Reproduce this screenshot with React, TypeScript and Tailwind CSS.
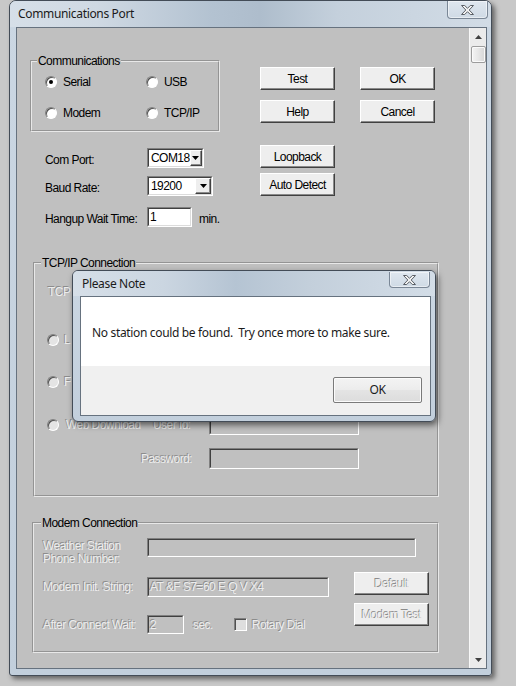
import React from "react";

const classic =
  "font-['Liberation_Sans',Arial,sans-serif] text-[12px] leading-[14px] tracking-[-0.55px] text-black";
const dis = "text-[#ededed] [text-shadow:-1px_-1px_0_#8c8c8c]";
const seg =
  "font-['Noto_Sans',sans-serif] text-[12px] leading-[16px] tracking-[-0.34px] text-[#1b1b1b]";

function ClassicButton({ label, disabled = false }: { label: string; disabled?: boolean }) {
  return (
    <div className="w-[75px] h-[23px] flex items-center justify-center bg-[#eeeeee] border border-t-white border-l-white border-b-[#404040] border-r-[#404040] shadow-[inset_-1px_-1px_0_#8a8a8a]">
      <span className={disabled ? dis : "text-black"}>{label}</span>
    </div>
  );
}

function Radio({ checked = false, disabled = false }: { checked?: boolean; disabled?: boolean }) {
  return (
    <div
      className={
        "w-[12px] h-[12px] rounded-full border border-t-[#808080] border-l-[#808080] border-b-white border-r-white flex items-center justify-center shrink-0 shadow-[inset_1px_1px_0_#505050] " +
        (disabled ? "bg-[#e4e4e4]" : "bg-white")
      }
    >
      {checked && <div className="w-[4px] h-[4px] rounded-full bg-black" />}
    </div>
  );
}

function Sunken({
  className,
  enabled = false,
  children,
}: {
  className: string;
  enabled?: boolean;
  children?: React.ReactNode;
}) {
  return (
    <div
      className={
        "shrink-0 border border-t-[#808080] border-l-[#808080] border-b-white border-r-white " + className
      }
    >
      <div
        className={
          "w-full h-full border border-t-[#404040] border-l-[#404040] flex items-center " +
          (enabled
            ? "bg-white border-b-[#dcdcdc] border-r-[#dcdcdc]"
            : "bg-[#c0c0c0] border-b-[#c0c0c0] border-r-[#c0c0c0]")
        }
      >
        {children}
      </div>
    </div>
  );
}

function DropArrow() {
  return (
    <div className="w-[16px] h-full flex items-center justify-center bg-[#eeeeee] border border-t-white border-l-white border-b-[#404040] border-r-[#404040] shadow-[inset_-1px_-1px_0_#8a8a8a]">
      <svg width="7" height="4" viewBox="0 0 7 4">
        <path d="M0 0 L7 0 L3.5 4 Z" fill="#000" />
      </svg>
    </div>
  );
}

function CloseGlyph() {
  return (
    <svg width="13" height="10" viewBox="0 0 13 10">
      <path
        d="M0.5 0.5 L3.7 0.5 L6.5 3.3 L9.3 0.5 L12.5 0.5 L8.2 5 L12.5 9.5 L9.3 9.5 L6.5 6.7 L3.7 9.5 L0.5 9.5 L4.8 5 Z"
        fill="#f2f2f2"
        stroke="#5a5f66"
        strokeWidth="1"
        strokeLinejoin="round"
      />
    </svg>
  );
}

function CloseButton({ w, h }: { w: string; h: string }) {
  return (
    <div
      className={
        "flex items-center justify-center border border-t-0 border-[#7a8796] rounded-b-[4px] bg-[linear-gradient(180deg,#dfe7ef_0%,#cfdae5_100%)] shadow-[inset_0_0_0_1px_rgba(255,255,255,0.5)] " +
        w +
        " " +
        h
      }
    >
      <CloseGlyph />
    </div>
  );
}

export default function App() {
  return (
    <div className="relative w-[516px] h-[686px] bg-[#c8c8c8] overflow-hidden">
      {/* Main window */}
      <div className="ml-[9px] w-[483px] h-[676px] flex flex-col border border-[#434c57] rounded-t-[7px] rounded-b-[3px] bg-[linear-gradient(180deg,#cbd7e3_0%,#c2cfdc_100%)] shadow-[3px_3px_5px_rgba(0,0,0,0.5)]">
        <div className="h-[26px] shrink-0 flex items-start pl-[8px] pr-[3px] rounded-t-[6px] bg-[linear-gradient(90deg,#d6dfe8_0%,#cfd9e3_18%,#b3c2d1_42%,#aebdcc_52%,#c4d0dc_68%,#d2dce6_100%)]">
          <span className={seg + " mt-[5px]"}>Communications Port</span>
          <div className="ml-auto">
            <CloseButton w="w-[41px]" h="h-[18px]" />
          </div>
        </div>

        {/* Client */}
        <div className="ml-[6px] mr-[4px] mb-[5px] h-[642px] border border-[#66727f] flex bg-[#c0c0c0]">
          <div className={classic + " w-[452px] h-full pl-[13px] pt-[26px] flex flex-col"}>
            {/* Top section */}
            <div className="flex">
              <div className="w-[230px] flex flex-col">
                <fieldset className="w-[190px] h-[78px] border-2 [border-style:groove] border-[#e8e8e8]">
                  <legend className="ml-[5px] px-[1px]">Communications</legend>
                  <div className="grid grid-cols-[101px_auto] pl-[13px] mt-[7px] gap-y-[17px]">
                    <div className="flex items-center h-[14px]">
                      <Radio checked />
                      <span className="ml-[6px]">Serial</span>
                    </div>
                    <div className="flex items-center h-[14px]">
                      <Radio />
                      <span className="ml-[6px]">USB</span>
                    </div>
                    <div className="flex items-center h-[14px]">
                      <Radio />
                      <span className="ml-[6px]">Modem</span>
                    </div>
                    <div className="flex items-center h-[14px]">
                      <Radio />
                      <span className="ml-[6px]">TCP/IP</span>
                    </div>
                  </div>
                </fieldset>

                <div className="flex items-center h-[20px] mt-[16px]">
                  <span className="w-[117px] pl-[15px] pt-[4px]">Com Port:</span>
                  <Sunken className="w-[57px] h-[20px]" enabled>
                    <span className="flex-1 pl-[2px]">COM18</span>
                    <DropArrow />
                  </Sunken>
                </div>
                <div className="flex items-center h-[20px] mt-[8px]">
                  <span className="w-[117px] pl-[15px] pt-[4px]">Baud Rate:</span>
                  <Sunken className="w-[66px] h-[20px]" enabled>
                    <span className="flex-1 pl-[2px]">19200</span>
                    <DropArrow />
                  </Sunken>
                </div>
                <div className="flex items-center h-[20px] mt-[11px]">
                  <span className="w-[117px] pl-[15px] pt-[4px]">Hangup Wait Time:</span>
                  <Sunken className="w-[45px] h-[20px]" enabled>
                    <span className="pl-[1px]">1</span>
                  </Sunken>
                  <span className="ml-[7px] pt-[4px]">min.</span>
                </div>
              </div>

              <div className="mt-[13px] flex flex-col">
                <div className="flex gap-x-[25px]">
                  <ClassicButton label="Test" />
                  <ClassicButton label="OK" />
                </div>
                <div className="flex gap-x-[25px] mt-[10px]">
                  <ClassicButton label="Help" />
                  <ClassicButton label="Cancel" />
                </div>
                <div className="mt-[22px]">
                  <ClassicButton label="Loopback" />
                </div>
                <div className="mt-[5px]">
                  <ClassicButton label="Auto Detect" />
                </div>
              </div>
            </div>

            {/* TCP/IP Connection */}
            <fieldset className="ml-[3px] mt-[29px] w-[406px] h-[241px] border-2 [border-style:groove] border-[#e8e8e8]">
              <legend className="ml-[6px] px-[1px]">TCP/IP Connection</legend>
              <div className="flex flex-col pl-[12px]">
                <div className={"mt-[15px] ml-[1px] h-[14px] " + dis}>TCP</div>
                <div className="flex items-center h-[14px] mt-[34px]">
                  <Radio disabled />
                  <span className={"ml-[5px] " + dis}>L</span>
                </div>
                <div className="flex items-center h-[14px] mt-[28px]">
                  <Radio disabled />
                  <span className={"ml-[5px] " + dis}>F</span>
                </div>
                <div className="flex items-center h-[20px] mt-[26px]">
                  <Radio disabled />
                  <span className={"ml-[7px] w-[87px] " + dis}>Web Download</span>
                  <span className={"w-[56px] " + dis}>User Id:</span>
                  <Sunken className="w-[150px] h-[20px]" />
                </div>
                <div className="flex items-center h-[21px] mt-[13px]">
                  <span className={"w-[162px] text-right pr-[17px] " + dis}>Password:</span>
                  <Sunken className="w-[150px] h-[21px]" />
                </div>
              </div>
            </fieldset>

            {/* Modem Connection */}
            <fieldset className="ml-[2px] mt-[19px] w-[407px] h-[137px] border-2 [border-style:groove] border-[#e8e8e8]">
              <legend className="ml-[7px] px-[1px]">Modem Connection</legend>
              <div className="flex flex-col pl-[9px] pt-[8px]">
                <div className="flex items-start h-[19px]">
                  <span className={"w-[104px] leading-[13px] pt-[2px] " + dis}>
                    Weather Station
                    <br />
                    Phone Number:
                  </span>
                  <Sunken className="w-[269px] h-[19px]" />
                </div>
                <div className="flex">
                  <div className="w-[311px] flex flex-col pt-[20px]">
                    <div className="flex items-center h-[20px]">
                      <span className={"w-[104px] " + dis}>Modem Init. String:</span>
                      <Sunken className="w-[182px] h-[20px]">
                        <span className={"pl-[1px] " + dis}>AT &amp;F S7=60 E Q V X4</span>
                      </Sunken>
                    </div>
                    <div className="flex items-center h-[19px] mt-[18px]">
                      <span className={"w-[104px] " + dis}>After Connect Wait:</span>
                      <Sunken className="w-[37px] h-[19px]">
                        <span className={"pl-[1px] " + dis}>2</span>
                      </Sunken>
                      <span className={"ml-[9px] " + dis}>sec.</span>
                      <div className="ml-[21px] w-[13px] h-[13px] border border-t-[#808080] border-l-[#808080] border-b-white border-r-white bg-[#dedede] shadow-[inset_1px_1px_0_#505050]" />
                      <span className={"ml-[5px] " + dis}>Rotary Dial</span>
                    </div>
                  </div>
                  <div className="flex flex-col mt-[15px] gap-y-[8px]">
                    <ClassicButton label="Default" disabled />
                    <ClassicButton label="Modem Test" disabled />
                  </div>
                </div>
              </div>
            </fieldset>
          </div>

          {/* Scrollbar */}
          <div className="w-[17px] h-full bg-[#ebebeb] border-l border-[#f8f8f8] flex flex-col items-center">
            <div className="h-[17px] w-full flex items-center justify-center">
              <svg width="7" height="4" viewBox="0 0 7 4">
                <path d="M0 4 L3.5 0 L7 4 Z" fill="#404040" />
              </svg>
            </div>
            <div className="w-[15px] h-[17px] mt-[1px] rounded-[2px] border border-[#9c9c9c] bg-[linear-gradient(90deg,#f4f4f4_0%,#e6e6e6_50%,#d6d6d6_100%)] shadow-[inset_0_0_0_1px_#fafafa]" />
            <div className="flex-1" />
            <div className="h-[17px] w-full flex items-center justify-center">
              <svg width="7" height="4" viewBox="0 0 7 4">
                <path d="M0 0 L7 0 L3.5 4 Z" fill="#404040" />
              </svg>
            </div>
          </div>
        </div>
      </div>

      {/* Please Note dialog */}
      <div className="absolute left-[72px] top-[270px] w-[364px] h-[152px] flex flex-col border border-[#434c57] rounded-[6px] bg-[linear-gradient(180deg,#cbd7e3_0%,#c2cfdc_100%)] shadow-[2px_3px_6px_rgba(0,0,0,0.55)]">
        <div className="h-[25px] shrink-0 flex items-start pl-[9px] pr-[5px] rounded-t-[5px] bg-[linear-gradient(90deg,#d6dfe8_0%,#cbd6e1_25%,#b5c4d3_45%,#c3cfdb_65%,#d3dde7_100%)]">
          <span className={seg + " mt-[5px]"}>Please Note</span>
          <div className="ml-auto mt-[1px]">
            <CloseButton w="w-[41px]" h="h-[16px]" />
          </div>
        </div>
        <div className="ml-[7px] mr-[4px] border border-[#66727f] flex flex-col">
          <div className="h-[69px] bg-white pl-[11px] pt-[22px]">
            <span className={seg + " whitespace-pre"}>No station could be found.  Try once more to make sure.</span>
          </div>
          <div className="h-[49px] bg-[#f0f0f0] flex justify-end items-start pr-[8px] pt-[11px]">
            <div className="w-[89px] h-[26px] flex items-center justify-center border border-[#7a7a7a] rounded-[2px] bg-[linear-gradient(180deg,#f3f3f3_0%,#ececec_50%,#e4e4e4_51%,#dcdcdc_100%)] shadow-[inset_0_0_0_1px_#fbfbfb]">
              <span className={seg}>OK</span>
            </div>
          </div>
        </div>
      </div>
    </div>
  );
}
